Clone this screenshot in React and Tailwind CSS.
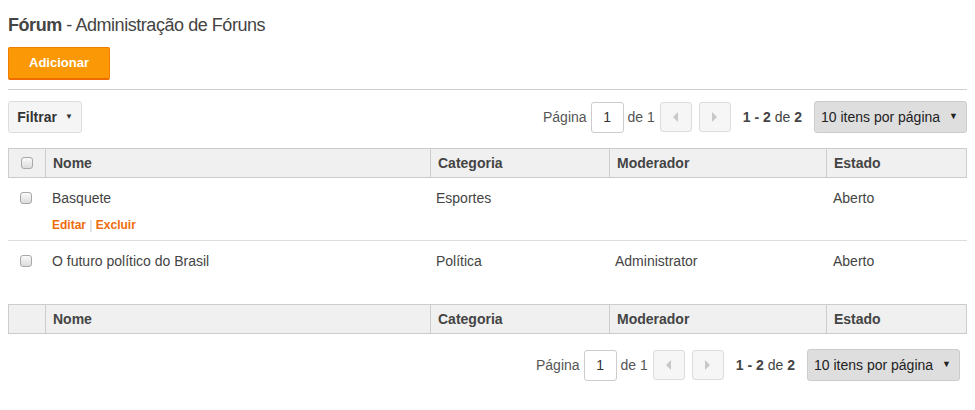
import React from 'react'

const COLUNAS = [
  { id: 'nome', label: 'Nome', w: 'w-[385px]' },
  { id: 'categoria', label: 'Categoria', w: 'w-[179px]' },
  { id: 'moderador', label: 'Moderador', w: 'w-[217px]' },
  { id: 'estado', label: 'Estado', w: 'flex-1' },
]

const FORUNS = [
  { nome: 'Basquete', categoria: 'Esportes', moderador: '', estado: 'Aberto', acoes: true },
  { nome: 'O futuro político do Brasil', categoria: 'Política', moderador: 'Administrator', estado: 'Aberto' },
]

function Caixa() {
  return (
    <span className="inline-block w-[12px] h-[12px] rounded-[3px] border border-[#a8a8a8] bg-gradient-to-b from-[#fafafa] to-[#dcdcdc]" />
  )
}

function Paginacao() {
  return (
    <div className="flex items-center text-[14px] text-[#555]">
      <span className="mr-[4px]">Página</span>
      <div className="w-[33px] h-[31px] border border-[#ccc] rounded-[3px] flex items-center justify-center text-[#333] bg-white">1</div>
      <span className="ml-[4px] mr-[5px]">de 1</span>
      <div className="w-[32px] h-[30px] border border-[#ddd] rounded-[3px] bg-[#f6f6f6] flex items-center justify-center">
        <span className="w-0 h-0 border-y-[5px] border-y-transparent border-r-[5px] border-r-[#c8c8c8]" />
      </div>
      <div className="ml-[7px] w-[32px] h-[30px] border border-[#ddd] rounded-[3px] bg-[#f6f6f6] flex items-center justify-center">
        <span className="w-0 h-0 border-y-[5px] border-y-transparent border-l-[5px] border-l-[#c8c8c8]" />
      </div>
      <span className="ml-[12px] text-[#444]"><b>1 - 2</b> de <b>2</b></span>
      <div className="ml-[12px] w-[153px] h-[32px] bg-[#dedede] border border-[#ccc] rounded-[3px] flex items-center justify-between pl-[6px] pr-[8px] text-[#222]">
        <span>10 itens por página</span>
        <span className="text-[9px]">▼</span>
      </div>
    </div>
  )
}

function Cabecalho({ comCaixa }) {
  return (
    <div className="flex h-[30px] bg-[#f0f0f0] border border-[#ccc] text-[14px] font-bold text-[#444]">
      <div className="w-[37px] border-r border-[#ccc] flex items-center justify-center">
        {comCaixa && <Caixa />}
      </div>
      {COLUNAS.map((col, i) => (
        <div
          key={col.id}
          className={`${col.w} flex items-center px-[7px] ${i < COLUNAS.length - 1 ? 'border-r border-[#ccc]' : ''}`}
        >
          {col.label}
        </div>
      ))}
    </div>
  )
}

export default function App() {
  return (
    <div className="w-[975px] h-[410px] bg-white px-[8px] pt-[12px] font-['Liberation_Sans',Arial,sans-serif] text-[#444]">
      {/* Titulo */}
      <h1 className="text-[18px] leading-[26px] text-[#444] tracking-[-0.45px]">
        <b className="text-[#444]">Fórum</b> - Administração de Fóruns
      </h1>

      <button className="mt-[9px] w-[102px] h-[33px] bg-[#fa9805] border border-[#f07d00] border-b-2 border-b-[#ef6c00] rounded-[2px] text-white text-[13px] font-bold">
        Adicionar
      </button>

      <div className="mt-[9px] border-t border-[#cfcfcf]" />

      {/* Barra de filtro */}
      <div className="mt-[11px] flex items-center justify-between">
        <button className="w-[74px] h-[32px] bg-[#f5f5f5] border border-[#ddd] rounded-[3px] text-[14px] font-bold text-[#333] flex items-center justify-center gap-[8px]">
          Filtrar <span className="text-[8px]">▼</span>
        </button>
        <Paginacao />
      </div>

      {/* Tabela */}
      <div className="mt-[15px]">
        <Cabecalho comCaixa />
        {FORUNS.map((f, i) => (
          <div key={i} className={`flex text-[14px] text-[#444] ${f.acoes ? 'h-[63px] border-b border-[#ddd]' : 'h-[40px]'}`}>
            <div className="w-[37px] pt-[11px] pl-[12px]"><Caixa /></div>
            <div className="w-[385px] px-[7px] pt-[10px]">
              <div>{f.nome}</div>
              {f.acoes && (
                <div className="mt-[7px] text-[12px] font-bold text-[#f06b0a]">
                  Editar <span className="font-normal text-[#ccc]">|</span> Excluir
                </div>
              )}
            </div>
            <div className="w-[179px] px-[6px] pt-[10px]">{f.categoria}</div>
            <div className="w-[217px] px-[6px] pt-[10px]">{f.moderador}</div>
            <div className="flex-1 px-[7px] pt-[10px]">{f.estado}</div>
          </div>
        ))}
        <div className="mt-[23px]">
          <Cabecalho />
        </div>
      </div>

      <div className="mt-[15px] flex justify-end pr-[7px]">
        <Paginacao />
      </div>
    </div>
  )
}
